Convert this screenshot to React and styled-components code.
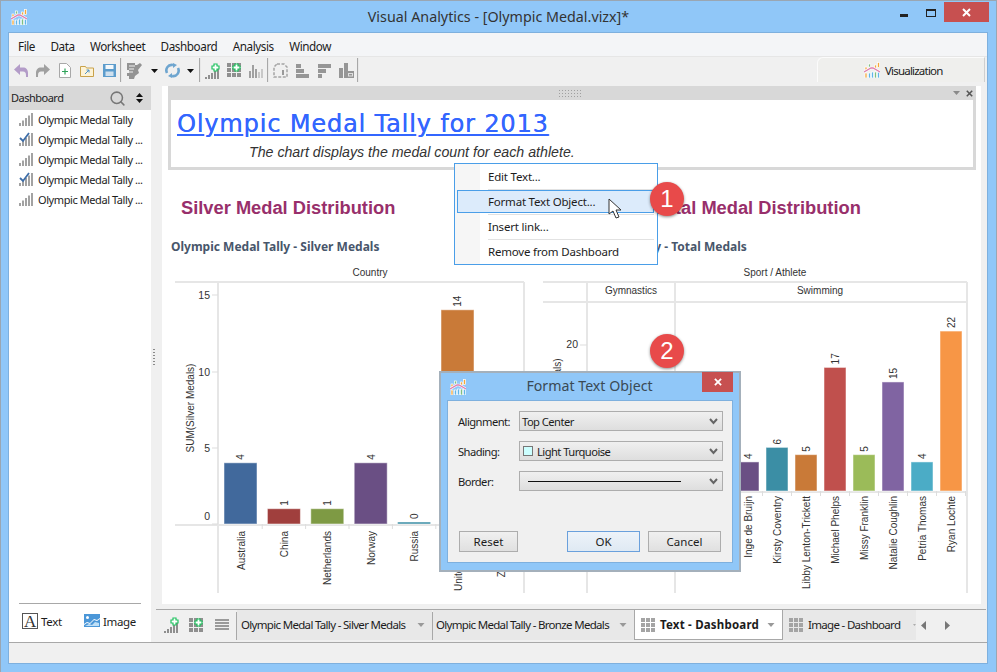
import React from 'react'
import styled, { createGlobalStyle } from 'styled-components'
import { Search } from 'lucide-react'

const ui = '"Noto Sans", "Open Sans", sans-serif'
const arial = '"Liberation Sans", Arial, sans-serif'

const Global = createGlobalStyle`
    html, body { margin: 0; padding: 0; background: #fff; }
    * { box-sizing: border-box; }
    body { font-family: ${ui}; font-size: 11.5px; color: #1c1c1c; }
`

const Frame = styled.div`
    position: relative;
    width: 997px;
    height: 672px;
    overflow: hidden;
    display: flex;
    flex-direction: column;
    background: #90c7f8;
    border: 1px solid #9aa6b2;
    border-bottom: none;
`
const TitleBar = styled.div`
    height: 31px;
    flex: none;
    display: grid;
    grid-template-columns: 200px 1fr 200px;
    align-items: center;
    padding-left: 10px;
`
const WindowTitle = styled.div`
    font-size: 14.3px;
    text-align: center;
    color: #333;
    padding-right: 10px;
`
const WindowButtons = styled.div`
    display: flex;
    justify-self: end;
    align-self: start;
    align-items: flex-start;
    margin-top: 1px;
    margin-right: 7px;
`
const MinButton = styled.div`
    width: 8px;
    height: 3px;
    background: #222;
    margin: 12px 18px 0 0;
`
const MaxButton = styled.div`
    width: 10px;
    height: 8px;
    border: 1px solid #222;
    border-top-width: 2px;
    margin: 7px 8px 0 0;
`
const CloseButton = styled.div`
    width: 45px;
    height: 20px;
    background: #c75050;
    color: #fff;
    display: flex;
    align-items: center;
    justify-content: center;
`
const Body = styled.div`
    flex: 1;
    display: flex;
    flex-direction: column;
    margin: 0 8px 8px 7px;
    border: 1px solid #7eb0de;
    background: #f0f0f0;
    min-height: 0;
`
const MenuBar = styled.div`
    height: 24px;
    flex: none;
    display: flex;
    align-items: center;
    padding: 2px 0 0 9px;
    gap: 15.4px;
    background: #f4f5f7;
    border-bottom: 1px solid #e6e6e6;
    font-size: 11.7px;
    letter-spacing: -0.42px;
`
const ToolBar = styled.div`
    height: 29px;
    flex: none;
    display: flex;
    align-items: flex-start;
    position: relative;
    padding-left: 1px;
    background: #f0f0f0;
`
const Tool = styled.div`
    width: ${p => p.$w || 22}px;
    height: 27px;
    display: flex;
    align-items: center;
    justify-content: center;
`
const ToolSep = styled.div`
    width: 2px;
    height: 24px;
    margin-top: 1px;
    background: #a8a8a8;
    border-right: 1px solid #e8e8e8;
`
const VizTab = styled.div`
    margin-left: auto;
    margin-right: 2px;
    width: 168px;
    height: 25px;
    border: 1px solid #fbfbfb;
    border-bottom: none;
    border-right-color: #cfcfcf;
    border-top-left-radius: 6px;
    background: #efefed;
    display: flex;
    align-items: center;
    justify-content: flex-start;
    gap: 5px;
    padding-left: 46px;
    font-size: 11.5px;
    letter-spacing: -0.8px;
`
const Main = styled.div`
    flex: 1;
    display: flex;
    min-height: 0;
`
const Sidebar = styled.div`
    width: 142px;
    flex: none;
    display: flex;
    flex-direction: column;
    background: #fff;
`
const SideHead = styled.div`
    height: 24px;
    flex: none;
    display: flex;
    align-items: center;
    padding: 0 8px 0 2px;
    background: #d8d8d8;
    color: #222;
    font-size: 11px;
    letter-spacing: -0.5px;
    span { flex: 1; padding-bottom: 2px; }
    svg { display: block; }
`
const SortMark = styled.svg`
    margin-left: 10px;
`
const SideList = styled.div`
    flex: 1;
`
const SideRow = styled.div`
    height: 20px;
    display: flex;
    align-items: center;
    gap: 5px;
    padding: 0 0 2px 10px;
    font-size: 11px;
    letter-spacing: -0.42px;
    white-space: nowrap;
`
const SideFoot = styled.div`
    height: 39px;
    flex: none;
    margin: 0 10px;
    border-top: 1px solid #a8a8a8;
    display: flex;
    align-items: center;
    padding: 0 0 4px 3px;
    gap: 22px;
    font-size: 11.5px;
    letter-spacing: -0.3px;
`
const FootItem = styled.div`
    display: flex;
    align-items: center;
    gap: 3px;
`
const LetterIcon = styled.span`
    width: 16px;
    height: 16px;
    border: 1px solid #555;
    font-family: "Liberation Serif", serif;
    font-size: 17px;
    line-height: 15px;
    text-align: center;
    color: #333;
`
const Splitter = styled.div`
    width: 5px;
    flex: none;
    display: flex;
    align-items: center;
    justify-content: center;
    padding-bottom: 14px;
    &::before {
        content: '';
        width: 2px;
        height: 16px;
        background: repeating-linear-gradient(to bottom, #8a8a8a 0 1px, transparent 1px 3px);
    }
`
const Workspace = styled.div`
    flex: 1;
    min-width: 0;
    display: flex;
    flex-direction: column;
`
const Canvas = styled.div`
    height: 518px;
    flex: none;
    margin: 0 6px;
    background: #fff;
    padding-left: 6px;
    overflow: hidden;
`
const TextPanel = styled.div`
    width: 808px;
    height: 84px;
    border: 3px solid #d8d8d8;
    border-top: none;
    border-top-left-radius: 3px;
    display: flex;
    flex-direction: column;
`
const PanelHead = styled.div`
    height: 14px;
    flex: none;
    background: #d8d8d8;
    position: relative;
    margin: 0 -3px;
    display: flex;
    align-items: center;
    justify-content: flex-end;
    gap: 6px;
    padding-right: 3px;
    svg { display: block; }
`
const Grip = styled.div`
    position: absolute;
    left: 390px;
    top: 3px;
    width: 24px;
    height: 9px;
    background-image: radial-gradient(#a0a0a0 0.8px, transparent 1px);
    background-size: 3px 3px;
`
const PanelBody = styled.div`
    flex: 1;
    background: #fff;
    padding: 8px 0 0 6px;
`
const BigTitle = styled.div`
    font-family: "DejaVu Sans", Verdana, sans-serif;
    font-size: 24px;
    line-height: 32px;
    letter-spacing: 0.85px;
    color: #3366ff;
    text-decoration: underline;
    text-shadow: 0.3px 0 0 #3366ff;
`
const Subtitle = styled.div`
    font-family: ${arial};
    font-style: italic;
    font-size: 14.2px;
    line-height: 16px;
    margin: 4px 0 0 72px;
    color: #333;
`
const ChartRow = styled.div`
    display: grid;
    grid-template-columns: 360px 445px;
    margin-left: 2px;
    padding-top: 27px;
`
const ChartPanel = styled.div`
    display: flex;
    flex-direction: column;
`
const ChartHeading = styled.div`
    font-family: ${arial};
    font-weight: bold;
    font-size: 18.3px;
    line-height: 22px;
    color: #982f6b;
    margin-left: ${p => p.$indent}px;
`
const ChartSub = styled.div`
    font-weight: bold;
    font-size: 12px;
    line-height: 16px;
    margin: 20px 0 0 ${p => p.$indent}px;
    color: #48566b;
`
const ChartSvg = styled.svg`
    display: block;
    margin-top: 8px;
    font-family: ${arial};
    font-size: 10px;
    text { fill: #333; }
`
const TabStrip = styled.div`
    margin: 5px 1px 0 0;
    height: 33px;
    flex: none;
    border-top: 1px solid #a8a8a8;
    display: flex;
    align-items: flex-start;
    padding-left: 3px;
    overflow: hidden;
`
const StripTool = styled.div`
    width: 25px;
    height: 30px;
    display: flex;
    align-items: center;
    justify-content: center;
`
const StripSep = styled.div`
    width: 1px;
    height: 28px;
    margin: 2px 0 0 ${p => p.$gap || 0}px;
    background: #a8a8a8;
`
const Tab = styled.div`
    width: ${p => p.$w}px;
    height: 30px;
    flex: none;
    display: flex;
    align-items: center;
    overflow: hidden;
    padding: 0 ${p => p.$right ?? 7}px 0 ${p => p.$left || 4}px;
    gap: 5px;
    background: ${p => (p.$active ? '#fff' : '#e8e8e8')};
    border: ${p => (p.$active ? '1px solid #a8a8a8' : 'none')};
    border-top: none;
    font-size: 11.5px;
    font-weight: ${p => (p.$active ? 'bold' : 'normal')};
    letter-spacing: ${p => (p.$active ? '0.2px' : '-0.68px')};
    white-space: nowrap;
    color: #1c1c1c;
    span { flex: 1; padding-bottom: 1px; }
    svg { flex: none; }
`
const NavArrows = styled.div`
    display: flex;
    align-items: center;
    height: 30px;
    gap: 19px;
    padding-left: 5px;
`
const StatusBar = styled.div`
    height: 21px;
    flex: none;
    background: #f0f0f0;
    border-top: 1px solid #a8a8a8;
`
const ContextMenu = styled.div`
    position: absolute;
    left: 453px;
    top: 162px;
    width: 204px;
    height: 102px;
    background: linear-gradient(to right, #f6f6f6 0 25px, #fff 25px);
    border: 1px solid #4a9ee8;
    padding: 1px 3px 0 2px;
    font-size: 11.5px;
    letter-spacing: -0.2px;
`
const MenuItem = styled.div`
    height: ${p => (p.$hover ? 23 : 24)}px;
    display: flex;
    align-items: center;
    padding: 0 0 ${p => (p.$hover ? 0 : 2)}px ${p => (p.$hover ? 30 : 31)}px;
    margin-bottom: ${p => (p.$hover ? 1 : 0)}px;
    background: ${p => (p.$hover ? '#dcebfb' : 'transparent')};
    border: ${p => (p.$hover ? '1px solid #4a9ee8' : 'none')};
    color: #1c1c1c;
`
const MenuLine = styled.div`
    height: 1px;
    margin-left: 31px;
    background: #e2e2e2;
`
const Badge = styled.div`
    position: absolute;
    left: ${p => p.$x - 18}px;
    top: ${p => p.$y - 18}px;
    width: 34px;
    height: 34px;
    border-radius: 50%;
    background: #e84a4a;
    box-shadow: 0 1px 3px rgba(0, 0, 0, 0.45);
    color: #fff;
    font-family: ${arial};
    font-size: 24px;
    line-height: 34px;
    text-align: center;
`
const Cursor = styled.svg`
    position: absolute;
    left: 607px;
    top: 197px;
`
const Dialog = styled.div`
    position: absolute;
    left: 438px;
    top: 370px;
    width: 302px;
    height: 201px;
    background: #90c7f8;
    border: 2px solid #a4b0bb;
    display: flex;
    flex-direction: column;
    padding: 0 6px 7px 6px;
`
const DialogHead = styled.div`
    height: 27px;
    flex: none;
    display: flex;
    align-items: center;
    position: relative;
    padding-left: 3px;
`
const DialogTitle = styled.div`
    flex: 1;
    text-align: center;
    font-size: 14.2px;
    color: #3a4a55;
    padding: 0 20px 2px 0;
`
const DialogClose = styled.div`
    position: absolute;
    right: 0;
    top: -1px;
    width: 31px;
    height: 20px;
    background: #c75050;
    display: flex;
    align-items: center;
    justify-content: center;
    color: #fff;
`
const DialogBody = styled.div`
    flex: 1;
    background: #f0f0f0;
    border: 1px solid #7eb0de;
    padding: 10px 10px 10px 10px;
    display: flex;
    flex-direction: column;
`
const FormRow = styled.div`
    display: grid;
    grid-template-columns: 61px 204px;
    align-items: center;
    height: 20px;
    margin-bottom: 10px;
    font-size: 11.2px;
    letter-spacing: -0.55px;
`
const Select = styled.div`
    height: 20px;
    border: 1px solid #adadad;
    background: linear-gradient(to bottom, #f0f0f0, #dedede);
    display: flex;
    align-items: center;
    gap: 4px;
    padding: 0 4px 0 2px;
    span { flex: 1; }
`
const Swatch = styled.i`
    width: 10px;
    height: 10px;
    flex: none;
    margin-left: 1px;
    background: #ccffff;
    border: 1px solid #777;
`
const BorderLine = styled.div`
    flex: 1;
    height: 1px;
    margin: 0 24px 0 6px;
    background: #111;
`
const DialogFoot = styled.div`
    margin-top: auto;
    display: flex;
    padding: 0 0 0 1px;
`
const Button = styled.div`
    width: ${p => p.$w}px;
    height: 21px;
    margin-left: ${p => p.$gap || 0}px;
    border: 1px solid ${p => (p.$primary ? '#6aa0dc' : '#adadad')};
    background: ${p => (p.$primary ? 'linear-gradient(to bottom, #edf3f9, #dfe9f3)' : 'linear-gradient(to bottom, #f0f0f0, #e0e0e0)')};
    display: flex;
    align-items: center;
    justify-content: center;
    font-size: 11.5px;
`

// icons
const logoBars = [
    { x: 1, y: 11, h: 5, color: '#f4a83a' },
    { x: 4.5, y: 11, h: 5, color: '#5fb5e8' },
    { x: 7.5, y: 10, h: 6, color: '#5fb5e8' },
    { x: 10.5, y: 10, h: 6, color: '#7fc07f' },
    { x: 13.5, y: 10, h: 6, color: '#5fb5e8' },
    { x: 1, y: 5, h: 3, color: '#f4a83a' },
    { x: 4.5, y: 2, h: 3, color: '#7fc07f' },
    { x: 10.5, y: 3, h: 3, color: '#f4a83a' },
    { x: 13.5, y: 0.5, h: 5, color: '#f4a83a' },
]

const AppLogo = ({ size = 16 }) => (
    <svg width={size} height={size} viewBox="0 0 16 16">
        {logoBars.map(b => (
            <rect key={b.x + '-' + b.y} x={b.x} y={b.y} width="2" height={b.h} fill={b.color} stroke="#fff" strokeWidth="0.7" />
        ))}
        <polyline points="0,10 7,6 9,6 16,10" fill="none" stroke="#fff" strokeWidth="2.4" />
        <polyline points="0,10 7,6 9,6 16,10" fill="none" stroke="#de7fae" strokeWidth="1.3" />
    </svg>
)

const Bars = ({ check }) => (
    <svg width="14" height="14" viewBox="0 0 14 14">
        {[0, 3, 6, 9, 12].map((x, i) => (
            <rect key={x} x={x} y={11 - i * 2.5} width="2" height={3 + i * 2.5} fill="#a2a2a2" />
        ))}
        {check && <polyline points="1,6 4,9 10,1" fill="none" stroke="#3d6da8" strokeWidth="1.8" />}
    </svg>
)

const FadedBars = () => (
    <svg width="14" height="14" viewBox="0 0 14 14">
        <rect x="0" y="7" width="2" height="7" fill="#a0a0a0" />
        <rect x="3" y="1" width="2" height="13" fill="#a0a0a0" />
        <rect x="6" y="5" width="2" height="9" fill="#a0a0a0" />
        <rect x="9" y="8" width="2" height="6" fill="#c8c8c8" />
        <rect x="12" y="5" width="2" height="9" fill="#c8c8c8" />
    </svg>
)

const BarsPlus = () => (
    <svg width="15" height="16" viewBox="0 0 15 16">
        {[0, 3, 6, 9, 12].map((x, i) => (
            <rect key={x} x={x} y={14 - i * 2} width="2" height={2 + i * 2} fill="#8f8f8f" />
        ))}
        <path d="M7 3h2V1h3v2h2v3h-2v2H9V6H7z" fill="#fff" stroke="#1fc25f" strokeWidth="1.2" />
    </svg>
)

const GridPlus = () => (
    <svg width="15" height="15" viewBox="0 0 15 15">
        {[0, 5, 10].map(y => [0, 5, 10].map(x => (
            <rect key={x + '-' + y} x={x} y={y} width="4" height="4" fill="#8f8f8f" />
        )))}
        <path d="M6 3h2V1h3v2h2v3h-2v2H8V6H6z" fill="#fff" stroke="#1fc25f" strokeWidth="1.2" />
    </svg>
)

const GridIcon = () => (
    <svg width="14" height="14" viewBox="0 0 14 14">
        {[0, 5, 10].map(y => [0, 5, 10].map(x => (
            <rect key={x + '-' + y} x={x} y={y} width="4" height="4" fill="#a4a4a4" />
        )))}
    </svg>
)

const LinesIcon = () => (
    <svg width="14" height="12" viewBox="0 0 14 12">
        {[0, 3, 6, 9].map(y => <rect key={y} x="0" y={y} width="14" height="2" fill="#9a9a9a" />)}
    </svg>
)

const Caret = ({ color = '#111', w = 7 }) => (
    <svg width={w} height="4" viewBox="0 0 7 4">
        <path d="M0 0h7L3.5 4z" fill={color} />
    </svg>
)

const Cross = ({ size = 9, color = '#fff', width = 2 }) => (
    <svg width={size} height={size} viewBox="0 0 9 9">
        <path d="M1 1l7 7M8 1L1 8" stroke={color} strokeWidth={width} fill="none" />
    </svg>
)

const SelectArrow = () => (
    <svg width="9" height="7" viewBox="0 0 9 7">
        <path d="M1 1l3.5 4L8 1" stroke="#666" strokeWidth="2" fill="none" />
    </svg>
)

const ImageIcon = () => (
    <svg width="16" height="14" viewBox="0 0 16 14">
        <rect width="16" height="13" fill="#4b97d8" />
        <circle cx="3.500" cy="3.500" r="1.500" fill="#fff" />
        <path d="M0 10l3-2 3 1 4-4 3 1 3-2v1l-3 2-3-1-4 4-3-1-3 2z" fill="#fff" />
        <path d="M1 12l4-2 3 1 3-3 4 1v3z" fill="#bfe0f7" />
    </svg>
)

const toolIcons = {
    undo: <svg width="16" height="14" viewBox="0 0 16 14"><path d="M7 0L1 5.500 7 11V7.500h3c2 0 3 1 3 4v1.500h2V9c0-3.500-2-5.500-5-5.500H7z" fill="#b39cc8" /></svg>,
    redo: <svg width="16" height="14" viewBox="0 0 16 14"><path d="M9 0l6 5.500L9 11V7.500H6c-2 0-3 1-3 4v1.500H1V9c0-3.500 2-5.500 5-5.500h3z" fill="#a0a0a0" /></svg>,
    file: <svg width="12" height="15" viewBox="0 0 12 15"><path d="M.5.500h7l4 4v10H.5z" fill="#fff" stroke="#a8a8a8" /><path d="M6 5.500v6M3 8.500h6" stroke="#2fa35a" strokeWidth="1.200" /></svg>,
    folder: <svg width="14" height="12" viewBox="0 0 14 12"><path d="M.5 1.500h5l1 1.500h7v8.500H.5z" fill="#fdf3d6" stroke="#c9a24a" /><path d="M5 9l4-4M6.500 5H9v2.500" stroke="#4a90c8" fill="none" /></svg>,
    save: <svg width="13" height="13" viewBox="0 0 13 13"><rect width="13" height="13" fill="#5c9ccc" /><rect x="2.500" y="1" width="8" height="4" fill="#f4f8fb" /><rect x="2.500" y="7.500" width="8" height="4.500" fill="#cfe0ee" /></svg>,
    paint: <svg width="17" height="17" viewBox="0 0 17 17"><path d="M1 1h8v2h2l3-2 2 2-4 5 1 3-4 3-1 3H3v-3H1v-3h2V8H1z" fill="#939393" /><path d="M3 4h6M3 7h5M3 10h4" stroke="#f0f0f0" /></svg>,
    refresh: <svg width="15" height="15" viewBox="0 0 15 15"><path d="M2 10C0 6 3 1 8 2M13 5c2 4-1 9-6 8" fill="none" stroke="#6ea5cf" strokeWidth="2.600" /><path d="M8 0v5l4-3zM7 15v-5l-4 3z" fill="#6ea5cf" /></svg>,
    dash: <svg width="15" height="15" viewBox="0 0 15 15"><path d="M4 1h7l3 3v10H1V4z" fill="none" stroke="#a4a4a4" strokeWidth="1.500" strokeDasharray="3 1.500" /><rect x="9" y="7" width="2" height="5" fill="#9a9a9a" /></svg>,
    left: <svg width="13" height="15" viewBox="0 0 13 15"><path d="M0 1h5v4H0zM0 6h8v4H0zM0 11h13v4H0z" fill="#969696" /></svg>,
    top: <svg width="13" height="15" viewBox="0 0 13 15"><path d="M0 1h13v4H0zM0 6h8v4H0zM0 11h4v4H0z" fill="#969696" /></svg>,
    lock: <svg width="15" height="15" viewBox="0 0 15 15"><path d="M0 5h4v10H0zM5 0h4v15H5zM9 8h6v7H9z" fill="#969696" /><rect x="9.500" y="10.500" width="4" height="2.500" fill="none" stroke="#e0e0e0" /></svg>,
}

const silver = [
    { name: 'Australia', value: 4, color: '#41699c' },
    { name: 'China', value: 1, color: '#a03f3d' },
    { name: 'Netherlands', value: 1, color: '#7e9a44' },
    { name: 'Norway', value: 4, color: '#6a4f84' },
    { name: 'Russia', value: 0, color: '#3b8ea5' },
    { name: 'United States', value: 14, color: '#c97a38' },
    { name: 'Zimbabwe', value: 3, color: '#41699c' },
]

const total = [
    { name: 'Inge de Bruijn', value: 4, color: '#6a4f84' },
    { name: 'Kirsty Coventry', value: 6, color: '#3b8ea5' },
    { name: 'Libby Lenton-Trickett', value: 5, color: '#c97a38' },
    { name: 'Michael Phelps', value: 17, color: '#c0504d' },
    { name: 'Missy Franklin', value: 5, color: '#9bbb59' },
    { name: 'Natalie Coughlin', value: 15, color: '#8064a2' },
    { name: 'Petria Thomas', value: 4, color: '#4bacc6' },
    { name: 'Ryan Lochte', value: 22, color: '#f79646' },
]

const Rule = ({ x1, y1, x2, y2 }) => (
    <line x1={x1} y1={y1} x2={x2} y2={y2} stroke="#e6e6e6" strokeWidth="2" />
)

const Vertical = ({ x, y, anchor, children }) => (
    <text x={x} y={y} textAnchor={anchor} transform={`rotate(-90 ${x} ${y})`}>{children}</text>
)

const BarSeries = ({ data, left, step, width, base, unit, labelY }) => data.map((d, i) => {
    const x = left + i * step
    const top = base - Math.max(d.value * unit, 2)
    const mid = x + width / 2
    return (
        <g key={d.name}>
            <rect x={x} y={top} width={width} height={base - top} fill={d.color} stroke="#fff" strokeOpacity="0.5" strokeWidth="1" />
            <Vertical x={mid + 4} y={top - 3}>{d.value}</Vertical>
            <Vertical x={mid + 4} y={labelY} anchor="end">{d.name}</Vertical>
            <line x1={x + width + (step - width) / 2} y1={base} x2={x + width + (step - width) / 2} y2={base + 5} stroke="#ddd" />
        </g>
    )
})

const SilverChart = () => (
    <ChartSvg width="360" height="338" viewBox="170 262 360 338">
        <Rule x1="175" y1="281" x2="524" y2="281" />
        <Rule x1="218" y1="281" x2="218" y2="592" />
        <Rule x1="524" y1="281" x2="524" y2="592" />
        <Rule x1="175" y1="524" x2="524" y2="524" />
        <text x="370" y="275" textAnchor="middle">Country</text>
        <Vertical x="194" y="407" anchor="middle">SUM(Silver Medals)</Vertical>
        {[[15, 294, 298], [10, 371, 375], [5, 447, 451], [0, 523, 519]].map(([v, tick, y]) => (
            <g key={v}>
                <line x1="212" y1={tick} x2="218" y2={tick} stroke="#ddd" />
                <text x="210" y={y} textAnchor="end" fontSize="10.5">{v}</text>
            </g>
        ))}
        <BarSeries data={silver} left={224} step={43.4} width={33} base={523} unit={15.3} labelY={530} />
    </ChartSvg>
)

const TotalChart = () => (
    <ChartSvg width="445" height="338" viewBox="530 262 445 338">
        <Rule x1="543" y1="281" x2="967" y2="281" />
        <Rule x1="543" y1="301" x2="967" y2="301" />
        <Rule x1="587" y1="281" x2="587" y2="592" />
        <Rule x1="675" y1="281" x2="675" y2="592" />
        <Rule x1="967" y1="281" x2="967" y2="592" />
        <Rule x1="543" y1="491" x2="967" y2="491" />
        <text x="775" y="275" textAnchor="middle">Sport / Athlete</text>
        <text x="631" y="293" textAnchor="middle">Gymnastics</text>
        <text x="820" y="293" textAnchor="middle">Swimming</text>
        <Vertical x="561" y="400" anchor="middle">SUM(Total Medals)</Vertical>
        <line x1="580" y1="344" x2="587" y2="344" stroke="#ddd" />
        <text x="578" y="347" textAnchor="end" fontSize="10.5">20</text>
        <BarSeries data={total} left={737} step={29} width={22} base={490} unit={7.27} labelY={495} />
    </ChartSvg>
)

const menus = ['File', 'Data', 'Worksheet', 'Dashboard', 'Analysis', 'Window']
const sideItems = [false, true, false, true, false]

const App = () => (
    <>
        <Global />
        <Frame>
            <TitleBar>
                <AppLogo />
                <WindowTitle>Visual Analytics - [Olympic Medal.vizx]*</WindowTitle>
                <WindowButtons>
                    <MinButton />
                    <MaxButton />
                    <CloseButton><Cross /></CloseButton>
                </WindowButtons>
            </TitleBar>
            <Body>
                <MenuBar>
                    {menus.map(m => <span key={m}>{m}</span>)}
                </MenuBar>
                <ToolBar>
                    <Tool>{toolIcons.undo}</Tool>
                    <Tool>{toolIcons.redo}</Tool>
                    <Tool>{toolIcons.file}</Tool>
                    <Tool>{toolIcons.folder}</Tool>
                    <Tool>{toolIcons.save}</Tool>
                    <ToolSep />
                    <Tool $w={24}>{toolIcons.paint}</Tool>
                    <Tool $w={16}><Caret /></Tool>
                    <Tool $w={20}>{toolIcons.refresh}</Tool>
                    <Tool $w={17}><Caret /></Tool>
                    <ToolSep />
                    <Tool><BarsPlus /></Tool>
                    <Tool><GridPlus /></Tool>
                    <Tool><FadedBars /></Tool>
                    <ToolSep />
                    <Tool>{toolIcons.dash}</Tool>
                    <Tool>{toolIcons.left}</Tool>
                    <Tool>{toolIcons.top}</Tool>
                    <Tool>{toolIcons.lock}</Tool>
                    <ToolSep />
                    <VizTab><AppLogo />Visualization</VizTab>
                </ToolBar>
                <Main>
                    <Sidebar>
                        <SideHead>
                            <span>Dashboard</span>
                            <Search size={17} color="#777" strokeWidth={2.2} />
                            <SortMark width="7" height="10" viewBox="0 0 7 10">
                                <path d="M3.500 0L7 4H0zM3.500 10L0 6h7z" fill="#111" />
                            </SortMark>
                        </SideHead>
                        <SideList>
                            {sideItems.map((check, i) => (
                                <SideRow key={i}>
                                    <Bars check={check} />
                                    {i === 0 ? 'Olympic Medal Tally' : 'Olympic Medal Tally ...'}
                                </SideRow>
                            ))}
                        </SideList>
                        <SideFoot>
                            <FootItem><LetterIcon>A</LetterIcon>Text</FootItem>
                            <FootItem><ImageIcon />Image</FootItem>
                        </SideFoot>
                    </Sidebar>
                    <Splitter />
                    <Workspace>
                        <Canvas>
                            <TextPanel>
                                <PanelHead>
                                    <Grip />
                                    <Caret color="#8a8a8a" w={7} />
                                    <Cross size={7} color="#555" />
                                </PanelHead>
                                <PanelBody>
                                    <BigTitle>Olympic Medal Tally for 2013</BigTitle>
                                    <Subtitle>The chart displays the medal count for each athlete.</Subtitle>
                                </PanelBody>
                            </TextPanel>
                            <ChartRow>
                                <ChartPanel>
                                    <ChartHeading $indent={11}>Silver Medal Distribution</ChartHeading>
                                    <ChartSub $indent={1}>Olympic Medal Tally - Silver Medals</ChartSub>
                                    <SilverChart />
                                </ChartPanel>
                                <ChartPanel>
                                    <ChartHeading $indent={124}>Total Medal Distribution</ChartHeading>
                                    <ChartSub $indent={12}>Olympic Medal Tally - Total Medals</ChartSub>
                                    <TotalChart />
                                </ChartPanel>
                            </ChartRow>
                        </Canvas>
                        <TabStrip>
                            <StripTool><BarsPlus /></StripTool>
                            <StripTool><GridPlus /></StripTool>
                            <StripTool><LinesIcon /></StripTool>
                            <StripSep $gap={2} />
                            <Tab $w={195}><span>Olympic Medal Tally - Silver Medals</span><Caret color="#999" w={8} /></Tab>
                            <StripSep />
                            <Tab $w={201} $left={3}><span>Olympic Medal Tally - Bronze Medals</span><Caret color="#999" w={8} /></Tab>
                            <Tab $w={149} $active $left={6}><GridIcon /><span>Text - Dashboard</span><Caret color="#999" w={8} /></Tab>
                            <Tab $w={133} $left={6} $right={0}><GridIcon /><span>Image - Dashboard</span><Caret color="#999" w={3} /></Tab>
                            <NavArrows>
                                <svg width="5" height="9" viewBox="0 0 5 9"><path d="M5 0v9L0 4.500z" fill="#777" /></svg>
                                <svg width="5" height="9" viewBox="0 0 5 9"><path d="M0 0v9l5-4.500z" fill="#777" /></svg>
                            </NavArrows>
                        </TabStrip>
                    </Workspace>
                </Main>
                <StatusBar />
            </Body>
            <ContextMenu>
                <MenuItem>Edit Text...</MenuItem>
                <MenuLine />
                <MenuItem $hover>Format Text Object...</MenuItem>
                <MenuLine />
                <MenuItem>Insert link...</MenuItem>
                <MenuLine />
                <MenuItem>Remove from Dashboard</MenuItem>
            </ContextMenu>
            <Cursor width="15" height="21" viewBox="0 0 15 21">
                <path d="M1 1v15l4-3 3 7 3-1-3-7h5z" fill="#fff" stroke="#333" strokeWidth="1" />
            </Cursor>
            <Badge $x={667} $y={199}>1</Badge>
            <Badge $x={667} $y={351}>2</Badge>
            <Dialog>
                <DialogHead>
                    <AppLogo />
                    <DialogTitle>Format Text Object</DialogTitle>
                    <DialogClose><Cross size={8} /></DialogClose>
                </DialogHead>
                <DialogBody>
                    <FormRow>
                        <span>Alignment:</span>
                        <Select><span>Top Center</span><SelectArrow /></Select>
                    </FormRow>
                    <FormRow>
                        <span>Shading:</span>
                        <Select><Swatch /><span>Light Turquoise</span><SelectArrow /></Select>
                    </FormRow>
                    <FormRow>
                        <span>Border:</span>
                        <Select><BorderLine /><SelectArrow /></Select>
                    </FormRow>
                    <DialogFoot>
                        <Button $w={59}>Reset</Button>
                        <Button $w={73} $gap={49} $primary>OK</Button>
                        <Button $w={73} $gap={8}>Cancel</Button>
                    </DialogFoot>
                </DialogBody>
            </Dialog>
        </Frame>
    </>
)

export default App
